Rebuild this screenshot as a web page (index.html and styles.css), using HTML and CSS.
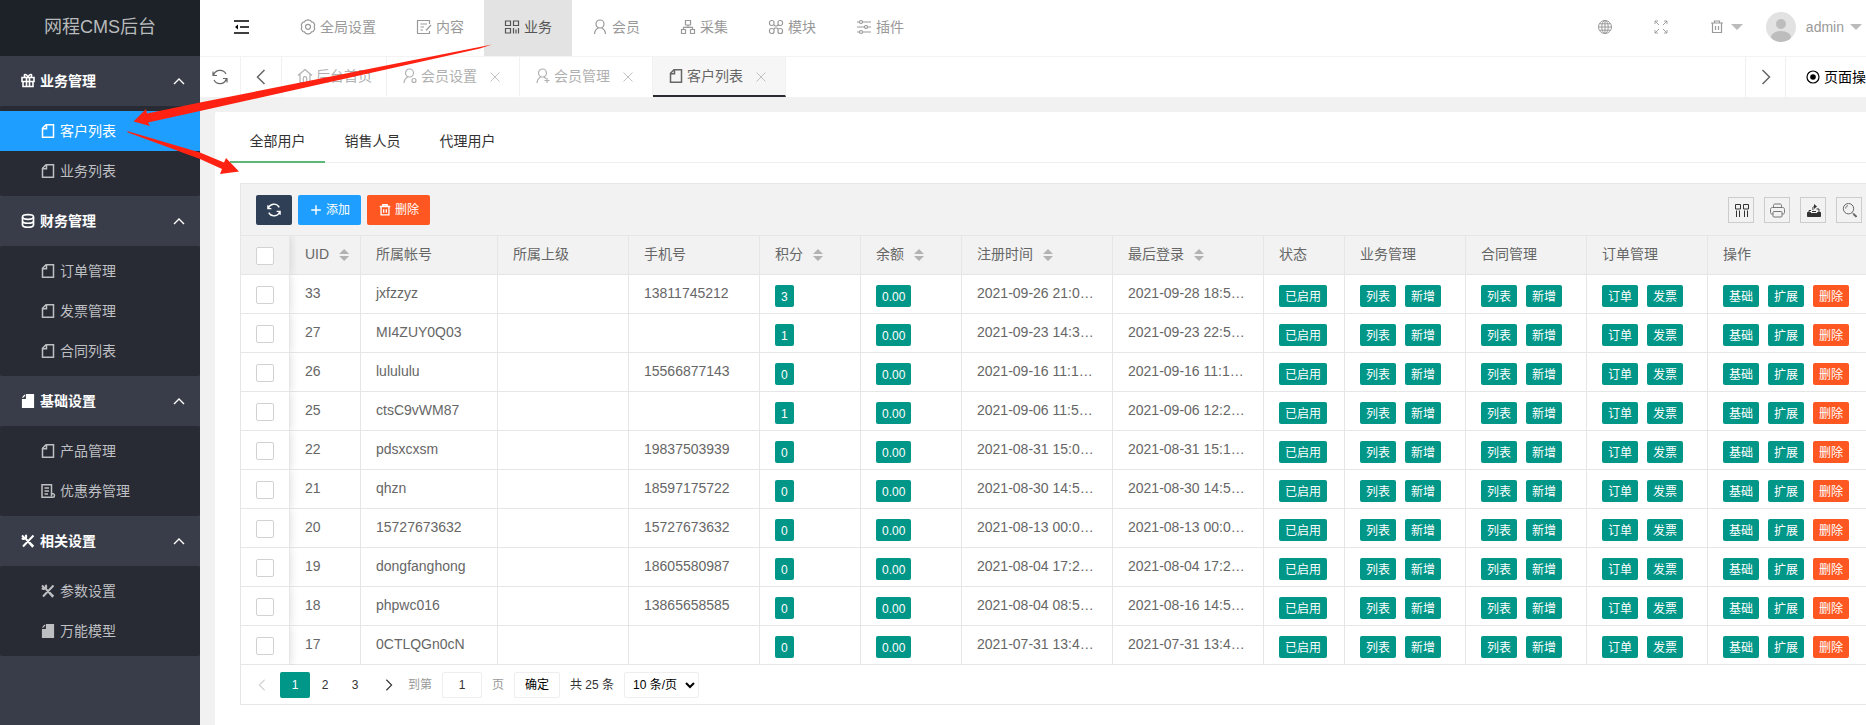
FILE: index.html
```html
<!DOCTYPE html>
<html lang="zh-CN">
<head>
<meta charset="utf-8">
<title>网程CMS后台</title>
<link rel="stylesheet" href="styles.css">
</head>
<body>
<svg class="sprite" aria-hidden="true">
  <symbol id="gift" viewBox="0 0 16 16"><path d="M2 4.500h12v4H2zM3 8.500h10v5H3zM6.500 4.500v9M9.500 4.500v9M8 4C6 0 3 1.500 5 4M8 4c2-4 5-2.500 3 0" stroke-width="1.600"/></symbol>
  <symbol id="file" viewBox="0 0 16 16"><path d="M6 1.700h7.500v12.600h-11V5.200zM6.500 2v3.700H3" stroke-width="1.500"/></symbol>
  <symbol id="filled" viewBox="0 0 16 16"><path fill="currentColor" d="M6.500 1.500h7v13h-11V6.500h4z"/><path d="M2.500 4.700L5 2"/></symbol>
  <symbol id="db" viewBox="0 0 16 16"><g stroke-width="1.700"><ellipse cx="8" cy="4" rx="5.500" ry="2.300"/><path d="M2.500 4v8c0 3 11 3 11 0V4M2.500 8c0 3 11 3 11 0"/></g></symbol>
  <symbol id="bill" viewBox="0 0 16 16"><path d="M11.500 10V1.800H2v12.500h11c2 0 2-3.500 0-3.500h-1.500v2.500M4.500 5H9M4.500 8H9M4.500 11H8" stroke-width="1.500"/></symbol>
  <symbol id="tools" viewBox="0 0 16 16"><path d="M3 13.500L13.500 2.500M6 6l7 8M2 2.500L4.500 5M5.500 1.800c2 2.500-1 5.500-3.700 3.500M10 10l3.500 3.500" stroke-width="2"/></symbol>
  <symbol id="up" viewBox="0 0 16 16"><path d="M3 11l5-5 5 5" stroke-width="1.400"/></symbol>
  <symbol id="left" viewBox="0 0 16 16"><path d="M11.500 1L4.500 8l7 7" stroke-width="1.500"/></symbol>
  <symbol id="right" viewBox="0 0 16 16"><path d="M4.500 1l7 7-7 7" stroke-width="1.500"/></symbol>
  <symbol id="fold" viewBox="0 0 16 16"><path d="M1 2h15M7 8h9M1 14h15" stroke-width="1.300"/><path fill="currentColor" stroke="none" d="M5 5.500v5L2 8z"/></symbol>
  <symbol id="gear" viewBox="0 0 16 16"><path d="M5.500 1.500L8 .8l2.500.7 1 1.400 1.700.3 1.500 2.500-.5 2 .5 2.300-1.500 2.500-1.700.3-1 1.400-2.500.9-2.500-.9-1-1.400-1.700-.3-1.500-2.500.5-2.300-.5-2 1.500-2.500 1.700-.3z"/><circle cx="8" cy="7.800" r="2.500"/></symbol>
  <symbol id="edit" viewBox="0 0 16 16"><path d="M13.500 5V1.500h-12v13h12V12M4.500 5H11M4.500 8H8M4.500 11H7M15 6l-5 5.500"/></symbol>
  <symbol id="app" viewBox="0 0 16 16"><path d="M1.500 2h5v4.500h-5zM9.500 2h5v4.500h-5zM1.500 9.500h5V14h-5zM9.500 9v5.500M12 10.500v4M14.500 9v5.500"/></symbol>
  <symbol id="user" viewBox="0 0 16 16"><circle cx="8" cy="5" r="4"/><path d="M2.500 15c.2-3 1.800-5 4-6.200M13.500 15c-.2-3-1.800-5-4-6.200"/></symbol>
  <symbol id="userset" viewBox="0 0 16 16"><circle cx="7.500" cy="5" r="4"/><path d="M2 15c.2-3 1.800-5 4-6.200"/><circle cx="12" cy="12.500" r="2"/></symbol>
  <symbol id="useradd" viewBox="0 0 16 16"><circle cx="7.500" cy="5" r="4"/><path d="M2 15c.2-3 1.800-5 4-6.200M9 9l2 1.500M12 10v5M9.500 12.500h5"/></symbol>
  <symbol id="tree" viewBox="0 0 16 16"><path d="M5.500 1.500h5v4.500h-5zM1.500 10.500h4v4h-4zM10.500 10.500h4v4h-4zM8 6v2.300M3.500 10.500V8.300h9v2.200"/></symbol>
  <symbol id="modules" viewBox="0 0 16 16"><rect x="1.500" y="1.500" width="4.500" height="5" rx="2"/><rect x="10" y="1.500" width="4.500" height="5" rx="2"/><rect x="1.500" y="9.500" width="4.500" height="5" rx="2"/><rect x="10" y="9.500" width="4.500" height="5" rx="2"/><path d="M6 6l1 1h2l1-1M6 10l1-1h2l1 1"/></symbol>
  <symbol id="sliders" viewBox="0 0 16 16"><path d="M1 3h2.500M6.500 3H15M1 8h7.500M11.500 8H15M1 13h2.500M6.500 13H15"/><circle cx="5" cy="3" r="1.500"/><circle cx="10" cy="8" r="1.500"/><circle cx="5" cy="13" r="1.500"/></symbol>
  <symbol id="globe" viewBox="0 0 16 16"><g stroke-width="1"><circle cx="8" cy="8" r="6.500"/><ellipse cx="8" cy="8" rx="3.200" ry="6.500"/><path d="M8 1.300v13.400M1.300 8h13.400M2.500 4.800h11M2.500 11.200h11"/></g></symbol>
  <symbol id="expand" viewBox="0 0 16 16"><path d="M6 6L2 2M2 5V2h3M10 6l4-4M11 2h3v3M6 10l-4 4M2 11v3h3M10 10l4 4M11 14h3v-3" stroke-width=".9"/></symbol>
  <symbol id="trash" viewBox="0 0 16 16"><path d="M2 4h12M3.500 4v9.500h9V4M5.500 4V2h5v2M6.500 7v4M9.500 7v4"/></symbol>
  <symbol id="refresh" viewBox="0 0 16 16"><path d="M1.500 6.500C3 .5 11-.5 14 5M14.500 9.500C13 15.500 5 16.500 2 11M1 2.500v4h4M15 13.500v-4h-4"/></symbol>
  <symbol id="home" viewBox="0 0 16 16"><path d="M1 7.500l7-6 7 6M3 6v8.500h3.300v-4.300c0-2 3.400-2 3.400 0v4.300H13V6"/></symbol>
  <symbol id="close" viewBox="0 0 16 16"><path d="M2 2l12 12M14 2L2 14"/></symbol>
  <symbol id="radio" viewBox="0 0 16 16"><circle cx="8" cy="8" r="6"/><circle cx="8" cy="8" r="2.800" fill="currentColor" stroke="none"/></symbol>
  <symbol id="plus" viewBox="0 0 16 16"><path d="M8 2.500v11M2.500 8h11" stroke-width="1.600"/></symbol>
  <symbol id="cols" viewBox="0 0 16 16"><path d="M2.500 2.500h5v4.500h-5zM10.500 2.500h5v4.500h-5zM3.500 8.500V15M6.500 8.500V15M11.500 8.500V15M14.500 8.500V15"/></symbol>
  <symbol id="print" viewBox="0 0 16 16"><g stroke="#777"><path d="M4.500 5.500V3.500c0-1 .5-1.500 1.500-1.500h5c1 0 1.500.5 1.500 1.500v2M4 12H3c-1 0-1.500-.5-1.500-1.500v-3c0-1.300.7-2 2-2h10c1.300 0 2 .7 2 2v3c0 1-.5 1.500-1.500 1.500h-1"/><rect x="4" y="9.500" width="9" height="5.500" rx="1"/></g></symbol>
  <symbol id="export" viewBox="0 0 16 16"><path fill="currentColor" d="M2.500 10.500h3l1 1h5l1-1h3v4h-13z"/><path d="M4 10.500V8.500h2M14 10.500V7h-2.500M7 9.500h4M8 8C7.500 5.500 8 4.500 9.500 4.500"/><path fill="currentColor" stroke="none" d="M9 2l3 2.500L9 7z"/></symbol>
  <symbol id="search" viewBox="0 0 16 16"><g stroke="#666"><circle cx="7.500" cy="6.700" r="5.200"/><path d="M4.700 6.500c0-1.800 1-2.600 2.300-2.800M11.300 10.700l1.500 1.500"/><path d="M12.500 12l3 2.800" stroke-width="2"/></g></symbol>
</svg>

<div class="app">
  <aside class="side">
    <h1 class="logo">网程CMS后台</h1>
    <nav>
      <button class="group" type="button"><svg class="icon"><use href="#gift"/></svg><span>业务管理</span><svg class="icon arrow"><use href="#up"/></svg></button>
      <ul class="sub">
        <li><a class="active" href="#"><svg class="icon"><use href="#file"/></svg>客户列表</a></li>
        <li><a href="#"><svg class="icon"><use href="#file"/></svg>业务列表</a></li>
      </ul>
      <button class="group" type="button"><svg class="icon"><use href="#db"/></svg><span>财务管理</span><svg class="icon arrow"><use href="#up"/></svg></button>
      <ul class="sub">
        <li><a href="#"><svg class="icon"><use href="#file"/></svg>订单管理</a></li>
        <li><a href="#"><svg class="icon"><use href="#file"/></svg>发票管理</a></li>
        <li><a href="#"><svg class="icon"><use href="#file"/></svg>合同列表</a></li>
      </ul>
      <button class="group" type="button"><svg class="icon"><use href="#filled"/></svg><span>基础设置</span><svg class="icon arrow"><use href="#up"/></svg></button>
      <ul class="sub">
        <li><a href="#"><svg class="icon"><use href="#file"/></svg>产品管理</a></li>
        <li><a href="#"><svg class="icon"><use href="#bill"/></svg>优惠券管理</a></li>
      </ul>
      <button class="group" type="button"><svg class="icon"><use href="#tools"/></svg><span>相关设置</span><svg class="icon arrow"><use href="#up"/></svg></button>
      <ul class="sub">
        <li><a href="#"><svg class="icon"><use href="#tools"/></svg>参数设置</a></li>
        <li><a href="#"><svg class="icon"><use href="#filled"/></svg>万能模型</a></li>
      </ul>
    </nav>
  </aside>

  <div class="main">
    <header class="topbar">
      <button class="fold" type="button" aria-label="收起菜单"><svg class="icon"><use href="#fold"/></svg></button>
      <nav class="topnav">
        <a href="#"><svg class="icon"><use href="#gear"/></svg>全局设置</a>
        <a href="#"><svg class="icon"><use href="#edit"/></svg>内容</a>
        <a class="active" href="#"><svg class="icon"><use href="#app"/></svg>业务</a>
        <a href="#"><svg class="icon"><use href="#user"/></svg>会员</a>
        <a href="#"><svg class="icon"><use href="#tree"/></svg>采集</a>
        <a href="#"><svg class="icon"><use href="#modules"/></svg>模块</a>
        <a href="#"><svg class="icon"><use href="#sliders"/></svg>插件</a>
      </nav>
      <div class="account">
        <button type="button" aria-label="网站首页"><svg class="icon"><use href="#globe"/></svg></button>
        <button type="button" aria-label="全屏"><svg class="icon"><use href="#expand"/></svg></button>
        <button class="clear" type="button" aria-label="清除缓存"><svg class="icon"><use href="#trash"/></svg><i class="caret"></i></button>
        <button class="user" type="button">
          <svg class="avatar" viewBox="0 0 30 30"><clipPath id="round"><circle cx="15" cy="15" r="15"/></clipPath><g clip-path="url(#round)"><path fill="#e2e2e2" d="M0 0h30v30H0z"/><circle cx="15" cy="12" r="5" fill="#bdbdbd"/><ellipse cx="15" cy="25" rx="10" ry="6" fill="#bdbdbd"/></g></svg>
          admin<i class="caret"></i>
        </button>
      </div>
    </header>

    <div class="tabs">
      <button class="ctl" type="button" aria-label="刷新"><svg class="icon"><use href="#refresh"/></svg></button>
      <button class="ctl" type="button" aria-label="向左"><svg class="icon"><use href="#left"/></svg></button>
      <div class="tablist">
        <a class="tab" href="#"><svg class="icon"><use href="#home"/></svg>后台首页</a>
        <a class="tab" href="#"><svg class="icon"><use href="#userset"/></svg>会员设置<svg class="icon x"><use href="#close"/></svg></a>
        <a class="tab" href="#"><svg class="icon"><use href="#useradd"/></svg>会员管理<svg class="icon x"><use href="#close"/></svg></a>
        <a class="tab active" href="#"><svg class="icon"><use href="#file"/></svg>客户列表<svg class="icon x"><use href="#close"/></svg></a>
      </div>
      <button class="ctl next" type="button" aria-label="向右"><svg class="icon"><use href="#right"/></svg></button>
      <button class="pageop" type="button"><svg class="icon"><use href="#radio"/></svg>页面操作</button>
    </div>

    <main class="card">
      <nav class="filter">
        <a class="active" href="#">全部用户</a>
        <a href="#">销售人员</a>
        <a href="#">代理用户</a>
      </nav>
      <section class="grid">
        <div class="toolbar">
          <button class="btn dark" type="button" aria-label="刷新表格"><svg class="icon"><use href="#refresh"/></svg></button>
          <button class="btn blue" type="button"><svg class="icon"><use href="#plus"/></svg>添加</button>
          <button class="btn red" type="button"><svg class="icon"><use href="#trash"/></svg>删除</button>
          <div class="tools">
            <button type="button" aria-label="筛选列"><svg class="icon"><use href="#cols"/></svg></button>
            <button type="button" aria-label="打印"><svg class="icon"><use href="#print"/></svg></button>
            <button type="button" aria-label="导出"><svg class="icon"><use href="#export"/></svg></button>
            <button type="button" aria-label="搜索"><svg class="icon"><use href="#search"/></svg></button>
          </div>
        </div>
        <table>
          <colgroup><col class="c-check"><col class="c-uid"><col class="c-name"><col class="c-text"><col class="c-text"><col class="c-num"><col class="c-num"><col class="c-time"><col class="c-time"><col class="c-state"><col class="c-link"><col class="c-link"><col class="c-link"><col></colgroup>
          <thead>
            <tr>
              <th class="pin"><input type="checkbox" aria-label="全选"></th>
              <th>UID<i class="sort"></i></th>
              <th>所属帐号</th>
              <th>所属上级</th>
              <th>手机号</th>
              <th>积分<i class="sort"></i></th>
              <th>余额<i class="sort"></i></th>
              <th>注册时间<i class="sort"></i></th>
              <th>最后登录<i class="sort"></i></th>
              <th>状态</th>
              <th>业务管理</th>
              <th>合同管理</th>
              <th>订单管理</th>
              <th>操作</th>
            </tr>
          </thead>
          <tbody id="rows"></tbody>
        </table>
        <div class="pager">
          <button class="step off" type="button" aria-label="上一页"><svg class="icon"><use href="#left"/></svg></button>
          <button class="num active" type="button">1</button>
          <button class="num" type="button">2</button>
          <button class="num" type="button">3</button>
          <button class="step" type="button" aria-label="下一页"><svg class="icon"><use href="#right"/></svg></button>
          <label class="jump">到第<input type="text" value="1">页</label>
          <button class="ok" type="button">确定</button>
          <span class="total">共 25 条</span>
          <select aria-label="每页条数"><option>10 条/页</option><option>20 条/页</option></select>
        </div>
      </section>
    </main>
  </div>

  <svg class="marks" aria-hidden="true">
    <path d="M492 44.500L200 102.500 147 113.500 146 109 133.500 121.500 150 126 148 122.500 200 111 480 48.500z"/>
    <path d="M127 131L200 152.500 224 162.500 226 158 239 171.500 220 174 222 169 200 159 128 132.500z"/>
  </svg>
</div>
<script src="app.js"></script>
</body>
</html>
```
FILE: styles.css
```css
* { box-sizing: border-box; }
body {
  margin: 0;
  overflow: hidden;
  background: #f1f1f1;
  color: #666;
  font: 14px/24px "Liberation Sans", "Noto Sans CJK SC", sans-serif;
}
a { color: inherit; text-decoration: none; }
ul { margin: 0; padding: 0; list-style: none; }
button, input, select { margin: 0; padding: 0; border: 0; background: none; color: inherit; font: inherit; }
.sprite { position: absolute; width: 0; height: 0; }
.icon { flex: none; width: 16px; height: 16px; fill: none; stroke: currentColor; stroke-width: 1.2; }

/* The workspace is wider than the window; its right edge is cut off. */
.app { position: relative; display: flex; width: calc(100% + 54px); min-height: 100vh; }
.main { flex: 1; min-width: 0; display: flex; flex-direction: column; }

/* Sidebar */
.side { flex: none; width: 200px; background: #393d49; }
.logo { margin: 0; height: 56px; padding-bottom: 2px; background: #1c2228; color: #b8babc; font-size: 18px; font-weight: 400; line-height: 54px; text-align: center; }
.group { display: flex; align-items: center; gap: 4px; width: 100%; height: 50px; padding: 0 13px 0 20px; color: #fff; font-weight: 700; text-align: left; }
.group span { flex: 1; }
.sub { padding: 5px 0; background: #282b33; border-radius: 2px; }
.sub a { display: flex; align-items: center; gap: 4px; height: 40px; padding-left: 40px; color: #bebfc2; }
.sub .active { background: #1e9fff; color: #fff; }

/* Top bar */
.topbar { display: flex; height: 57px; background: #fff; border-bottom: 1px solid #f3f3f3; color: #999; }
.fold { width: 80px; color: #000; padding: 0 0 2px 2px; line-height: 0; }
.topnav { display: flex; flex: 1; }
.topnav a { display: flex; align-items: center; gap: 4px; padding: 0 20px 2px; }
.topnav .active { background: #e3e3e3; color: #555; }
.account { display: flex; padding-right: 58px; }
.account button { display: flex; align-items: center; padding: 0 20px 2px; }
.account .clear { gap: 6px; padding-right: 3px; }
.account .user { gap: 10px; padding-right: 0; }
.account .user .caret { margin-left: -4px; }
.avatar { width: 30px; height: 30px; }
.caret { border: 6px solid transparent; border-top-color: #bbb; border-bottom: 0; }

/* Page tabs */
.tabs { display: flex; height: 40px; background: #fff; }
.ctl { display: flex; align-items: center; justify-content: center; width: 41px; border-right: 1px solid #f1f1f1; }
.ctl.next { border-left: 1px solid #f1f1f1; }
.tablist { display: flex; flex: 1; color: #b0b0b0; }
.tab { display: flex; align-items: center; gap: 3px; padding: 0 14px 0 15px; border-right: 1px solid #f1f1f1; border-bottom: 2px solid transparent; }
.tab .x { width: 12px; height: 12px; margin: 2px 4px 0 9px; color: #bbb; }
.tab.active { background: #f6f6f6; border-bottom-color: #282b33; color: #666; }
.pageop { display: flex; align-items: center; gap: 3px; width: 134px; padding-left: 19px; color: #000; }

/* Content card */
.card { flex: 1; margin: 15px 15px 0; padding: 10px 15px 0; background: #fff; border-radius: 2px 2px 0 0; }
.filter { display: flex; height: 41px; border-bottom: 1px solid #eee; color: #333; }
.filter a { width: 95px; height: 41px; line-height: 39px; text-align: center; }
.filter .active { border-bottom: 2px solid #5fb878; }
.grid { margin: 20px 10px 0; border: 1px solid #e6e6e6; }

.toolbar { display: flex; align-items: center; gap: 6px; height: 52px; padding: 0 17px 0 15px; background: #f2f2f2; border-bottom: 1px solid #e6e6e6; }
.btn { display: flex; align-items: center; gap: 3px; height: 30px; padding: 0 11px; border-radius: 2px; color: #fff; font-size: 12px; }
.btn .icon { width: 14px; height: 14px; stroke-width: 1.5; }
.dark { background: #2f4056; }
.blue { background: #1e9fff; }
.red { background: #ff5722; }
.tools { display: flex; gap: 10px; margin-left: auto; }
.tools button { display: flex; align-items: center; justify-content: center; width: 26px; height: 26px; border: 1px solid #ccc; color: #333; }
.tools .icon { stroke-width: 1; }

table { width: 100%; border-collapse: separate; border-spacing: 0; table-layout: fixed; }
.c-check { width: 49px; }
.c-uid { width: 71px; }
.c-name { width: 137px; }
.c-text { width: 131px; }
.c-num { width: 101px; }
.c-time { width: 151px; }
.c-state { width: 81px; }
.c-link { width: 121px; }
th, td { height: 39px; padding: 0 15px 2px; border: solid #e6e6e6; border-width: 0 1px 1px 0; font-weight: 400; text-align: left; white-space: nowrap; line-height: 28px; }
th:last-child, td:last-child { border-right: 0; }
th { background: #f2f2f2; }
.pin { position: relative; box-shadow: 1px 0 8px rgba(0, 0, 0, .12); clip-path: inset(0 -10px 0 0); }
.pin input { appearance: none; display: block; width: 18px; height: 18px; margin-top: 3px; background: #fff; border: 1px solid #d2d2d2; border-radius: 2px; }
.sort { display: inline-block; width: 10px; height: 12px; margin-left: 10px; vertical-align: -2px; background: #b2b2b2; clip-path: polygon(50% 0, 100% 42%, 0 42%, 0 58%, 100% 58%, 50% 100%, 0 58%, 0 42%); }
.tags { display: flex; gap: 9px; padding-top: 6px; }
.tag { display: block; height: 22px; padding: 0 6px; border-radius: 2px; background: #009688; color: #fff; font-size: 12px; line-height: 24px; }
.tag.red { background: #ff5722; }

.pager { display: flex; align-items: center; height: 39px; padding: 0 6px; color: #333; font-size: 12px; }
.step { display: flex; align-items: center; justify-content: center; width: 30px; height: 26px; }
.step .icon { width: 12px; height: 12px; stroke-width: 1.6; }
.pager .off { margin-right: 3px; color: #d2d2d2; }
.num { width: 30px; height: 26px; border-radius: 2px; }
.num.active { background: #009688; color: #fff; }
.num + .step { margin-left: 4px; }
.jump { display: flex; align-items: center; gap: 10px; margin-left: 4px; color: #999; }
.jump input { width: 40px; height: 26px; color: #333; text-align: center; }
.jump input, .ok, .pager select { border: 1px solid #eee; border-radius: 2px; background: #fff; }
.ok { width: 46px; height: 26px; margin: 0 10px; color: #000; }
.pager select { width: 75px; height: 26px; margin-left: 10px; padding-left: 4px; color: #000; }

/* Red pointers drawn over the page */
.marks { position: absolute; left: 0; top: 0; width: 500px; height: 200px; fill: #ff2212; pointer-events: none; }
```
FILE: app.js
```js
const customers = [
  [33, 'jxfzzyz', '13811745212', 3, '2021-09-26 21:0…', '2021-09-28 18:5…'],
  [27, 'MI4ZUY0Q03', '', 1, '2021-09-23 14:3…', '2021-09-23 22:5…'],
  [26, 'lulululu', '15566877143', 0, '2021-09-16 11:1…', '2021-09-16 11:1…'],
  [25, 'ctsC9vWM87', '', 1, '2021-09-06 11:5…', '2021-09-06 12:2…'],
  [22, 'pdsxcxsm', '19837503939', 0, '2021-08-31 15:0…', '2021-08-31 15:1…'],
  [21, 'qhzn', '18597175722', 0, '2021-08-30 14:5…', '2021-08-30 14:5…'],
  [20, '15727673632', '15727673632', 0, '2021-08-13 00:0…', '2021-08-13 00:0…'],
  [19, 'dongfanghong', '18605580987', 0, '2021-08-04 17:2…', '2021-08-04 17:2…'],
  [18, 'phpwc016', '13865658585', 0, '2021-08-04 08:5…', '2021-08-16 14:5…'],
  [17, '0CTLQGn0cN', '', 0, '2021-07-31 13:4…', '2021-07-31 13:4…'],
];

const tags = (...names) =>
  `<td><div class="tags">${names.map((name) =>
    `<button type="button" class="tag${name === '删除' ? ' red' : ''}">${name}</button>`).join('')}</div></td>`;

document.getElementById('rows').innerHTML = customers.map(([uid, name, phone, points, joined, seen]) => `
  <tr>
    <td class="pin"><input type="checkbox" aria-label="选择 ${name}"></td>
    <td>${uid}</td><td>${name}</td><td></td><td>${phone}</td>
    ${tags(points)}${tags('0.00')}
    <td>${joined}</td><td>${seen}</td>
    ${tags('已启用')}${tags('列表', '新增')}${tags('列表', '新增')}${tags('订单', '发票')}${tags('基础', '扩展', '删除')}
  </tr>`).join('');
```
